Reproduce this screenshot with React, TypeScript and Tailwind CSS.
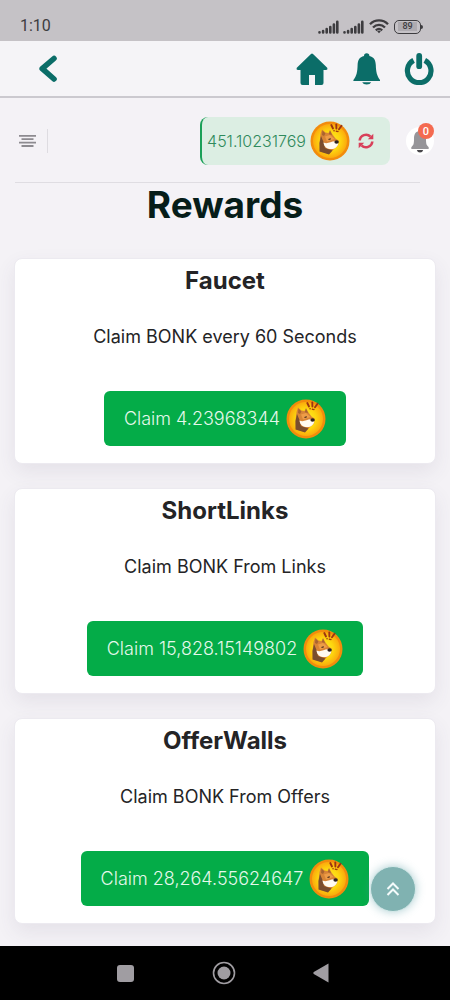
import React from 'react';

const rewards = [
  { title: 'Faucet', text: 'Claim BONK every 60 Seconds', amount: '4.23968344' },
  { title: 'ShortLinks', text: 'Claim BONK From Links', amount: '15,828.15149802' },
  { title: 'OfferWalls', text: 'Claim BONK From Offers', amount: '28,264.55624647' },
];

const BonkCoin = () => (
  <svg className="h-10 w-10 shrink-0" viewBox="0 0 40 40" aria-hidden="true">
    <defs>
      <radialGradient id="coin-face">
        <stop offset="0" stopColor="#ffee2c" />
        <stop offset="0.6" stopColor="#fdd60f" />
        <stop offset="1" stopColor="#fbaa0c" />
      </radialGradient>
    </defs>
    <circle cx="20" cy="20" r="19.5" fill="#f28c0c" />
    <circle cx="20" cy="20" r="17" fill="url(#coin-face)" />
    {/* head */}
    <path d="M10.5 13 L12 8.5 L15.5 11.5 L18.5 12 L20 9 L22.5 13.5 L25.5 17.5 L28.5 19.5 L28 24.5 L24.5 27.5 L22 30 L19 33 L10 30.5 L9.5 22Z" fill="#d88436" />
    <path d="M11 15 L9.5 22 L9.5 30.5 L19 33.5 L22.5 29.5 L15 27 L13.5 21Z" fill="#7a4d2e" />
    <path d="M12.5 9.5 L15.5 12.5 L14 15 L12 14Z M20 9.5 L22 14 L18.8 13.2Z" fill="#a8642f" />
    <path d="M15 15.5 L20 14 L24.5 18 L17 20.5Z" fill="#ee9d48" />
    <path d="M13.5 21.5 C18 24 21 19.5 27 20.5 C29.5 22 28 26 24 27.7 C19 29 14 27 13.5 21.5Z" fill="#fffaf0" />
    <ellipse cx="26.6" cy="21" rx="2.2" ry="1.7" fill="#2d211f" />
    <path d="M18.5 18.5 L20.8 17.8" stroke="#3b241a" strokeWidth="1.2" />
    {/* exclamation strokes */}
    <g stroke="#9c3512" strokeWidth="1.9" strokeLinecap="round">
      <path d="M21.3 4 L23 7.5" />
      <path d="M26.3 3.5 L26.4 7.6" />
      <path d="M31.5 4.8 L29 8.3" />
      <path d="M24 9.8 h0.1 M26.4 10.3 h0.1 M27.8 10.6 h0.1" strokeWidth="1.5" />
    </g>
  </svg>
);

const Signal = () => (
  <svg className="h-[14px] w-[21px]" viewBox="0 0 21 14" stroke="#3d3c3f" strokeWidth="2.6" strokeLinecap="round" aria-hidden="true">
    <path d="M1.5 12.5v-.2M5.1 12.5v-1.5M8.7 12.5V9M12.3 12.5V7M15.9 12.5V4.5M19.3 12.5V1.7" />
  </svg>
);

const StatusBar = () => (
  <div className="flex h-[41px] items-end justify-between bg-[#c5c2c6] pr-[27px] pb-[7px] pl-5 text-[#3d3c3f]">
    <span className="font-[Roboto] text-base leading-4">1:10</span>
    <div className="flex items-center gap-1">
      <Signal />
      <Signal />
      <svg className="ml-px h-[15px] w-5" viewBox="0 0 20 15" fill="none" stroke="#3d3c3f" strokeWidth="2.3" aria-hidden="true">
        <path d="M1 5.2 C6 .2 14 .2 19 5.2M4 8.5 C7.5 5 12.5 5 16 8.5M6.8 11.4 C8.8 9.5 11.2 9.5 13.2 11.4" />
        <path d="M8.2 12.3 L10 14.3 L11.8 12.3 Q10 10.8 8.2 12.3Z" fill="#3d3c3f" stroke="none" />
      </svg>
      <div className="ml-px flex items-center">
        <span className="flex h-[14px] w-[27px] items-center justify-center rounded-[5px] border border-[#3d3c3f] font-[Roboto] text-[9px] leading-none font-medium">
          <span className="bg-[#aeabb0] px-1">89</span>
        </span>
        <span className="h-1 w-0.5 rounded-r-sm bg-[#3d3c3f]" />
      </div>
    </div>
  </div>
);

const Header = () => (
  <header className="flex h-[57px] items-center justify-between border-b-2 border-[#cbc9cf] bg-[#f5f4f7] pr-4 pl-[38px]">
    <button type="button" aria-label="Back">
      <svg className="h-7 w-5" viewBox="0 0 20 28" fill="none" stroke="#0b6d68" strokeWidth="5.6" strokeLinecap="round" strokeLinejoin="round">
        <path d="M16 3.5 L4.2 13.7 L16 24" />
      </svg>
    </button>
    <nav className="flex items-center gap-6">
      <a href="#home" aria-label="Home">
        <svg className="h-8 w-8" viewBox="0 0 32 32" fill="#0b6d68">
          <path d="M15 1 Q16 .2 17 1 L31.2 14.8 Q32 17 30 17 H27.5 V30 Q27.5 32 25.5 32 H19 V22 H13 V32 H6.5 Q4.5 32 4.5 30 V17 H2 Q0 17 .8 14.8Z" />
        </svg>
      </a>
      <a href="#alerts" aria-label="Alerts">
        <svg className="h-8 w-7" viewBox="0 0 28 32" fill="#0b6d68">
          <path d="M12 3 Q12 .3 14.7 .3 T17.4 3 C22 4.2 23.6 7 23.8 12 C24 19 25 23 28 27 V28 H1.4 V27 C4.6 23 5.4 19 5.6 12 C5.8 7 7.4 4.2 12 3Z" />
          <path d="M10.2 29.3 H19.2 Q18.2 31.6 14.7 31.6 T10.2 29.3Z" />
        </svg>
      </a>
      <button type="button" aria-label="Log out">
        <svg className="h-8 w-[30px]" viewBox="0 0 30 32" fill="none" stroke="#0b6d68" strokeLinecap="round">
          <path d="M9.6 7.4 A11.8 11.8 0 1 0 20.8 7.4" strokeWidth="5.2" strokeLinecap="butt" />
          <path d="M15.2 3 V13.2" strokeWidth="5.8" />
        </svg>
      </button>
    </nav>
  </header>
);

const Toolbar = () => (
  <div className="flex h-12 items-center pr-4 pl-[19px]">
    <button type="button" aria-label="Menu" className="flex h-6 items-center border-r border-[#dedce1] pr-[11px]">
      <svg className="h-[14px] w-[17px]" viewBox="0 0 17 14" stroke="#8d8b90" strokeWidth="1.8">
        <path d="M0 1.8H17M2.5 5.2H14.5M0 8.6H17M2.5 12H14.5" />
      </svg>
    </button>
    <div className="ml-auto flex h-12 items-center gap-1 rounded-lg border-l-2 border-[#1ba058] bg-[#dceee3] pr-4 pl-[5px]">
      <span className="text-base font-light whitespace-nowrap text-[#2f8a5c]">451.10231769</span>
      <BonkCoin />
      <button type="button" aria-label="Refresh balance" className="ml-1">
        <svg className="h-4 w-4" viewBox="0 0 16 16" fill="none" stroke="#d8405a" strokeWidth="2.6">
          <path d="M1.7 7.5 A6.3 6.3 0 0 1 12.5 3.7 M14.3 8.5 A6.3 6.3 0 0 1 3.5 12.3" />
          <path d="M15.3 .8 V6.3 H9.8Z M.7 15.2 V9.7 H6.2Z" fill="#d8405a" stroke="none" />
        </svg>
      </button>
    </div>
    <button type="button" aria-label="Notifications" className="relative ml-4 flex h-7 w-7 items-center justify-center rounded-full bg-white">
      <svg className="h-[23px] w-5" viewBox="0 0 20 23">
        <path d="M10 1 C15 1 16 5 16 9 C16 14 16.5 15 18.5 17 Q19.5 19 17.5 19 H2.5 Q.5 19 1.5 17 C3.5 15 4 14 4 9 C4 5 5 1 10 1Z" fill="#969599" />
        <path d="M6.8 20 H13.2 Q12.5 22.5 10 22.5 T6.8 20Z" fill="#47464a" />
      </svg>
      <span className="absolute -top-1 right-0 flex h-4 w-4 items-center justify-center rounded-full bg-[#f46a50] font-[Roboto] text-[11px] leading-none font-medium text-white">
        0
      </span>
    </button>
  </div>
);

const RewardCard = ({ title, text, amount }: { title: string; text: string; amount: string }) => (
  <section className="flex flex-col items-center rounded-lg border border-[#eceaf0] bg-white px-4 pt-2 pb-[17px] text-[#242426] shadow-[0_8px_20px_rgba(80,70,100,0.09)]">
    <h2 className="text-2xl leading-7 font-bold">{title}</h2>
    <p className="mt-7 text-lg leading-7">{text}</p>
    <button
      type="button"
      className="mt-10 flex h-[55px] items-center gap-[6px] rounded-md bg-[#04ac48] px-5 text-lg whitespace-nowrap text-[#e5f8eb]"
    >
      <span className="font-light">Claim {amount}</span>
      <BonkCoin />
    </button>
  </section>
);

const App = () => {
  return (
    <div className="flex min-h-screen flex-col bg-[#f4f2f6] font-[Inter,sans-serif]">
      <StatusBar />
      <Header />
      <main className="flex-1 pt-[19px] pb-[22px]">
        <Toolbar />
        <hr className="mt-[17px] mr-[30px] ml-[15px] border-[#dfdde2]" />
        <h1 className="text-center text-[37px] leading-[44px] font-bold text-[#061d19]">Rewards</h1>
        <div className="mx-[14px] mt-[31px] flex flex-col gap-6">
          {rewards.map((reward) => (
            <RewardCard key={reward.title} {...reward} />
          ))}
        </div>
      </main>

      <button
        type="button"
        aria-label="Scroll to top"
        className="fixed right-[34px] bottom-[88px] flex h-[46px] w-[46px] items-center justify-center rounded-full border border-[#d5e9e9] bg-[#80b2b1] shadow-[0_0_10px_rgba(80,150,160,0.45)]"
      >
        <svg className="h-4 w-4" viewBox="0 0 16 16" fill="none" stroke="#f4fbfb" strokeWidth="2">
          <path d="M2.5 8 L8 2.5 L13.5 8M2.5 14 L8 8.5 L13.5 14" />
        </svg>
      </button>

      <nav className="flex h-[54px] items-center justify-between bg-black pr-[121px] pl-[117px]">
        <button type="button" aria-label="Recent apps" className="h-[17px] w-[17px] rounded-[3px] bg-[#a09da2]" />
        <button type="button" aria-label="Home screen">
          <svg className="h-6 w-6" viewBox="0 0 24 24">
            <circle cx="12" cy="12" r="10.5" fill="none" stroke="#a09da2" strokeWidth="1.6" />
            <circle cx="12" cy="12" r="6.5" fill="#a09da2" />
          </svg>
        </button>
        <button type="button" aria-label="Go back">
          <svg className="h-5 w-4" viewBox="0 0 16 20" fill="#a09da2">
            <path d="M15.5 .5 V19.5 L.8 11 Q-.2 10 .8 9Z" />
          </svg>
        </button>
      </nav>
    </div>
  );
};

export default App;
